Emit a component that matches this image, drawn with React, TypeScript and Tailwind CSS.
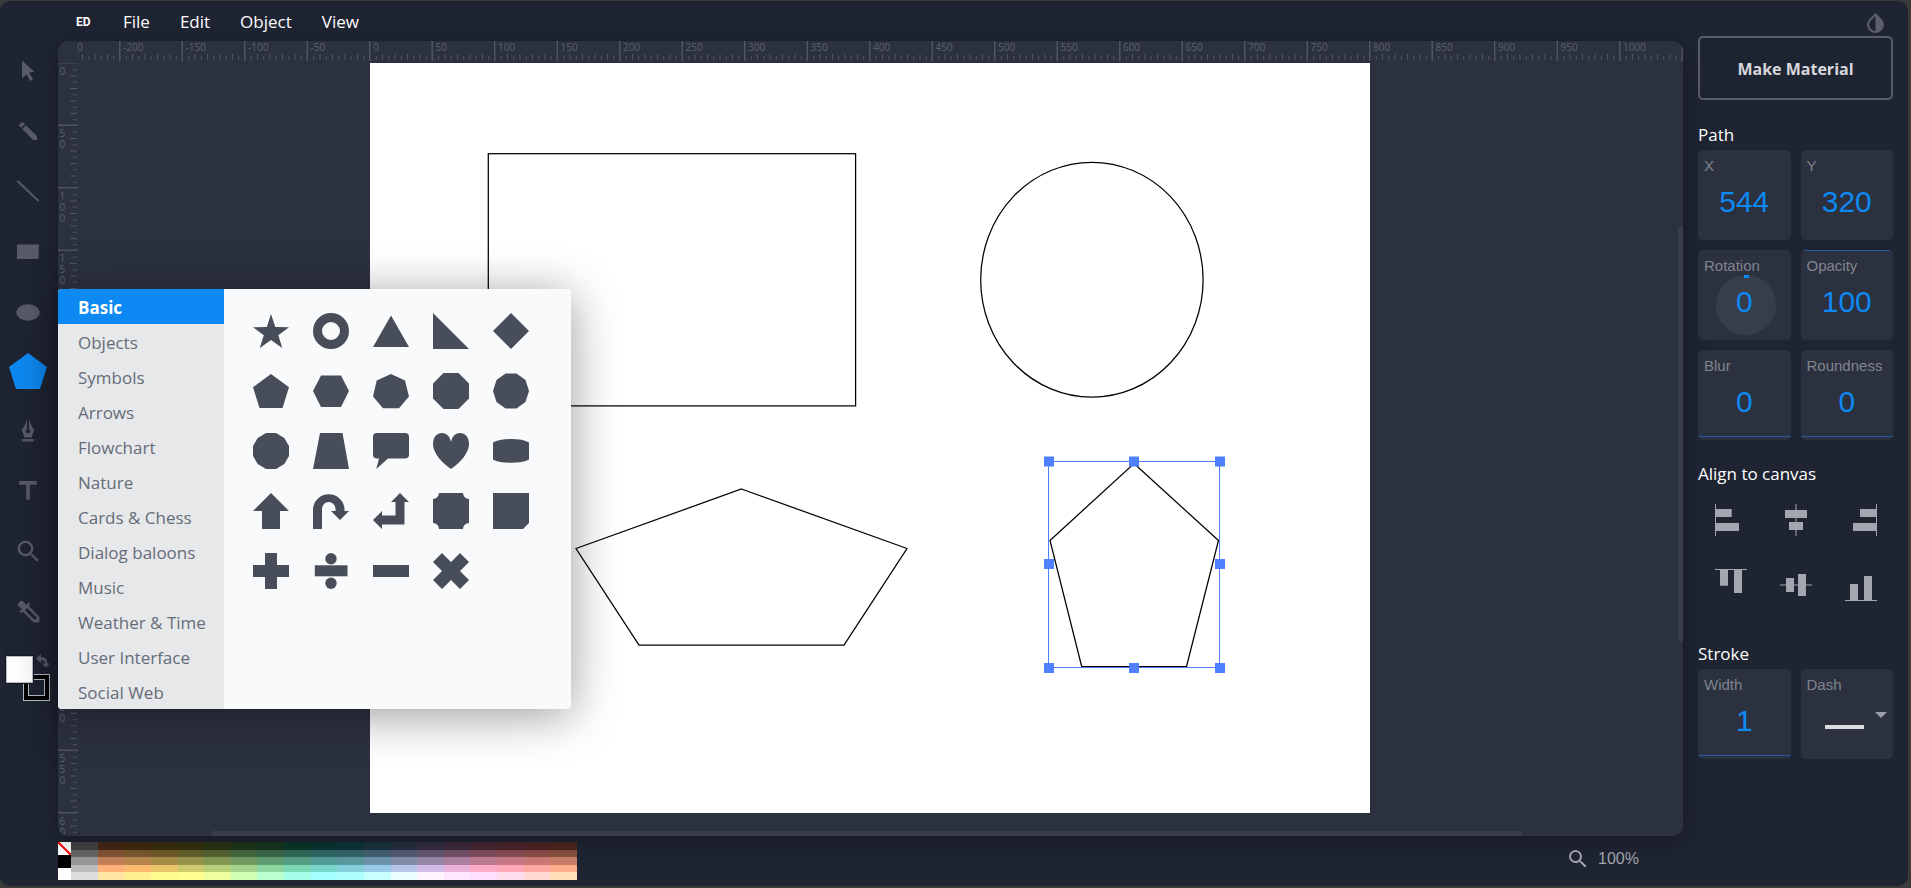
import { useState } from "react";
import type { ReactNode } from "react";
import { MdColorize, MdEdit, MdInvertColors, MdSearch, MdTitle } from "react-icons/md";

const MENUS = ["File", "Edit", "Object", "View"];

const CATEGORIES = [
  "Basic",
  "Objects",
  "Symbols",
  "Arrows",
  "Flowchart",
  "Nature",
  "Cards & Chess",
  "Dialog baloons",
  "Music",
  "Weather & Time",
  "User Interface",
  "Social Web",
];

const PALETTE: string[][] = [
  ["#444444", "#482816", "#422c10", "#3b2f0e", "#32320f", "#2a3414", "#1f361b", "#153723", "#0c372c", "#083734", "#0e353b", "#1a333f", "#273141", "#332d40", "#3e2a3c", "#462735", "#4b252d", "#4d2425", "#4c261d"],
  ["#666666", "#845335", "#7b572d", "#6f5c2a", "#62612b", "#546433", "#46673e", "#3a684a", "#306857", "#2d6762", "#34646b", "#436070", "#535b72", "#645670", "#74516a", "#804d5f", "#884c54", "#8a4c48", "#874f3d"],
  ["#999999", "#c48157", "#b8874d", "#a98e49", "#97944b", "#849854", "#729c62", "#619e73", "#559e84", "#529c95", "#5b9aa0", "#6d95aa", "#828eab", "#9888a9", "#ad81a1", "#be7b93", "#c77985", "#cb7975", "#c87e66"],
  ["#bbbbbb", "#ffb27c", "#fdba70", "#e8c46b", "#cecb6e", "#b8d07a", "#a2d58b", "#8cd79f", "#7dd8b5", "#7ad6ca", "#84d1db", "#9acbe7", "#b5c4e9", "#d0bce6", "#ebb3db", "#ffaccb", "#ffa9b9", "#ffa8a2", "#ffac8c"],
  ["#dddddd", "#ffe5a3", "#ffef93", "#fffa8e", "#ffff91", "#edffa0", "#d0ffb4", "#baffcf", "#a7ffea", "#a5ffff", "#afffff", "#c8ffff", "#eaffff", "#fff5ff", "#ffe8ff", "#ffdfff", "#ffdcec", "#ffdad4", "#ffdfba"],
];

const poly = (points: string) => <polygon points={points} />;

const SHAPES: { name: string; art: ReactNode }[] = [
  { name: "Star", art: poly("18,1 22.3,14 36,14.3 25.3,22.3 29.3,35 18,27 6.8,35 10.8,22.3 0,14.3 13.8,14") },
  { name: "Ring", art: <path fillRule="evenodd" d="M18 0a18 18 0 1 0 0 36a18 18 0 1 0 0-36zM18 9a9 9 0 1 1 0 18a9 9 0 1 1 0-18z" /> },
  { name: "Triangle", art: poly("18,2.5 36,34 0,34") },
  { name: "Right triangle", art: poly("0,0 36,36 0,36") },
  { name: "Diamond", art: poly("18,0 36,18 18,36 0,18") },
  { name: "Pentagon", art: poly("18,1 36,14.3 29.5,35 6.5,35 0,14.3") },
  { name: "Hexagon", art: poly("8,2.5 28,2.5 36,18 28,34 8,34 0,18") },
  { name: "Heptagon", art: poly("18,1 32,7.5 36,23.5 26,35.3 10,35.3 0,23.5 3.7,7.5") },
  { name: "Octagon", art: poly("10.5,0 25.5,0 36,10.5 36,25.5 25.5,36 10.5,36 0,25.5 0,10.5") },
  { name: "Decagon", art: poly("12.5,.5 23.5,.5 32.5,7 36,18 32.5,29 23.5,35.5 12.5,35.5 3.5,29 0,18 3.5,7") },
  { name: "Dodecagon", art: poly("13,0 23,0 31.3,5 36,13 36,23 31.3,31 23,36 13,36 4.7,31 0,23 0,13 4.7,5") },
  { name: "Trapezoid", art: poly("7,0 29.5,0 36,36 0,36") },
  { name: "Speech bubble", art: <path d="M4 0h28a4 4 0 0 1 4 4v17.5a4 4 0 0 1-4 4H15L3.3 36 6 25.5H4a4 4 0 0 1-4-4V4a4 4 0 0 1 4-4z" /> },
  { name: "Heart", art: <path d="M18 9C19 3 23 0 27 0c6 0 9 5 9 11 0 9-9 19-18 25C9 30 0 20 0 11 0 5 3 0 9 0c4 0 8 3 9 9z" /> },
  { name: "Barrel", art: <path d="M0 9.5C4 7 10 6 18 6s14 1 18 3.500v17c-4 2.300-10 3.300-18 3.300s-14-1-18-3.300z" /> },
  { name: "Up arrow", art: poly("18,0 36,18 27,18 27,36 9,36 9,18 0,18") },
  { name: "U-turn arrow", art: <path d="M0 36V15.700a15.800 15.700 0 0 1 31.500 0V18H36l-9 9-9-9h4.500v-2.300a6.750 6.700 0 0 0-13.500 0V36z" /> },
  { name: "Corner arrow", art: poly("27,0 36,9 31.5,9 31.5,31.5 9,31.5 9,36 0,27 9,18 9,22.5 22.5,22.5 22.5,9 18,9") },
  { name: "Plaque", art: <path d="M6 0h24a6 6 0 0 0 6 6v24a6 6 0 0 0-6 6H6a6 6 0 0 0-6-6V6a6 6 0 0 0 6-6z" /> },
  { name: "Card", art: poly("0,0 36,0 36,30 30,36 0,36") },
  { name: "Plus", art: poly("12,0 24,0 24,12 36,12 36,24 24,24 24,36 12,36 12,24 0,24 0,12 12,12") },
  {
    name: "Divide",
    art: (
      <>
        <circle cx="18" cy="5.700" r="5.700" />
        <rect x="1.800" y="12.300" width="32.700" height="11" />
        <circle cx="18" cy="30.300" r="5.700" />
      </>
    ),
  },
  { name: "Minus", art: <rect y="12" width="36" height="12" /> },
  { name: "Cross", art: poly("9,0 18,9 27,0 36,9 27,18 36,27 27,36 18,27 9,36 0,27 9,18 0,9") },
];

function Glyph({ children }: { children: ReactNode }) {
  return (
    <svg viewBox="-22 -22 44 44" className="size-11" fill="currentColor" aria-hidden="true">
      {children}
    </svg>
  );
}

const TOOLS: { name: string; art: ReactNode }[] = [
  { name: "Select", art: <Glyph><path d="M-6-10.500 6.300.8 1.200 1.500 5 8.300 2.200 10-1.400 3.300-6 7.500z" /></Glyph> },
  { name: "Pencil", art: <MdEdit className="size-6 -scale-x-100" /> },
  { name: "Line", art: <Glyph><path d="M-10.500-10 10.500 10" stroke="currentColor" strokeWidth="2" /></Glyph> },
  { name: "Rectangle", art: <Glyph><path d="M-11-6.500H11L10.500 8H-11z" /></Glyph> },
  { name: "Ellipse", art: <Glyph><ellipse cx="0" cy="1.500" rx="11.700" ry="8.200" /></Glyph> },
  { name: "Shape library", art: <Glyph><path d="M0-18 19-4 12 18H-12L-19-4z" /></Glyph> },
  {
    name: "Pen",
    art: (
      <Glyph>
        <path
          fillRule="evenodd"
          d="M-1-13V-1.500A2 2 0 1 0 1-1.500V-13C1.500-7 5-3.500 6.300-1 5 2 4 4.500 3.800 6.500H-3.800C-4 4.500-5 2-6.300-1-5-3.500-1.500-7-1-13zM-5.800 8H5.800V10.500H-5.800z"
        />
      </Glyph>
    ),
  },
  { name: "Text", art: <MdTitle className="size-[30px]" /> },
  { name: "Zoom", art: <MdSearch className="size-[29px]" /> },
  { name: "Eyedropper", art: <MdColorize className="size-[29px] -scale-x-100" /> },
];

const ALIGNMENTS: { name: string; d: string }[] = [
  { name: "Align left", d: "M0 0h1v32H0zM1 5h15.700v8H1zM1 19h23v8H1z" },
  { name: "Align center", d: "M15.500 0h1v32h-1zM5 6h22v8H5zM9 18h14v8H9z" },
  { name: "Align right", d: "M31 0h1v32h-1zM15 5h16v8H15zM8 19h23v8H8z" },
  { name: "Align top", d: "M0 0h32v1H0zM5 1h8v15.700H5zM19 1h8v23h-8z" },
  { name: "Align middle", d: "M0 15.500h32v1H0zM6 9h8v14H6zM18 5h8v22h-8z" },
  { name: "Align bottom", d: "M0 31h32v1H0zM5 15h8v16H5zM19 7h8v24h-8z" },
];

const UNIT = 1.25;
const STEP = 50 * UNIT;

function HorizontalRuler() {
  const origin = 312;
  const ticks: ReactNode[] = [];
  for (let k = -5; k <= 21; k++) {
    const x = origin + k * STEP;
    if (x > 24) ticks.push(<rect key={`m${k}`} x={x - 1} y="0" width="1.500" height="20" />);
    for (let i = 1; i < 10; i++) {
      const tx = x + (i * STEP) / 10;
      if (tx < 22) continue;
      const top = i % 2 ? 15 : 13;
      ticks.push(<rect key={`s${k}-${i}`} x={tx - 0.5} y={top} width="1" height={19 - top} />);
    }
    if (k > -5 && k < 21) {
      ticks.push(
        <text key={`t${k}`} x={x + 3} y="10" fontSize="10" fill="#5d616c">
          {k * 50}
        </text>,
      );
    }
  }
  return (
    <div className="h-[22px] pl-[19px]">
      <svg className="block h-5 w-full overflow-hidden" fill="#50545f" aria-hidden="true">
        <g transform="translate(-19 0)">{ticks}</g>
        {/* Only the last digit of the leading label fits beside the corner. */}
        <text x="0" y="10" fontSize="10" fill="#5d616c">
          0
        </text>
      </svg>
    </div>
  );
}

function VerticalRuler() {
  const ticks: ReactNode[] = [];
  for (let k = 0; k <= 12; k++) {
    const y = k * STEP;
    ticks.push(<rect key={`m${k}`} x="0" y={y - 1} width="20" height="1.500" />);
    for (let i = 1; i < 10; i++) {
      const ty = y + (i * STEP) / 10;
      const left = i % 2 ? 15 : 12;
      ticks.push(<rect key={`s${k}-${i}`} x={left} y={ty} width={19 - left} height="1" />);
    }
    String(k * 50)
      .slice(0, k === 12 ? 2 : 3)
      .split("")
      .forEach((digit, i) =>
        ticks.push(
          <text key={`t${k}-${i}`} x="1.500" y={y + 11.500 + i * 11} fontSize="10" fill="#5d616c">
            {digit}
          </text>,
        ),
      );
  }
  return (
    <svg className="block h-full w-5 shrink-0 overflow-hidden" fill="#50545f" aria-hidden="true">
      {ticks}
    </svg>
  );
}

const HANDLES = [
  [679, 398.500],
  [764, 398.500],
  [850, 398.500],
  [679, 501],
  [850, 501],
  [679, 605],
  [764, 605],
  [850, 605],
];

function Artboard() {
  return (
    <svg viewBox="0 0 1000 750" className="ml-[292px] block h-[750px] w-[1000px] shrink-0 bg-white" fill="none" role="img" aria-label="Artboard">
      <g stroke="#000" strokeWidth="1.250">
        <rect x="118.300" y="90.700" width="367.300" height="252.200" />
        <ellipse cx="721.900" cy="216.700" rx="111.200" ry="117.400" />
        <path d="M371.500 426 537 485.500 474 582H269L206 485.500z" />
        <path d="M764 400.500 848.500 477.500 816.500 603.500H711.700L680 477.500z" />
      </g>
      <rect x="678.500" y="398.500" width="171" height="206" stroke="#4f80ff" />
      <g fill="#4f80ff">
        {HANDLES.map(([x, y]) => (
          <rect key={`${x}-${y}`} x={x - 5} y={y - 5} width="10" height="10" />
        ))}
      </g>
    </svg>
  );
}

function ShapeLibrary() {
  const [active, setActive] = useState("Basic");
  return (
    <div className="absolute top-[288px] left-[58px] z-10 flex overflow-hidden rounded bg-[#f9fafc] shadow-[0_6px_48px_rgba(0,0,0,0.4)]">
      <div className="flex w-[166px] flex-col bg-[#e6e8ea]">
        {CATEGORIES.map((c) => (
          <button
            key={c}
            type="button"
            onClick={() => setActive(c)}
            className={
              c === active
                ? "h-[35px] bg-[#0c89f2] pt-0.5 pl-5 text-left text-[17px] font-bold text-white"
                : "h-[35px] pt-0.5 pl-5 text-left text-[17px] whitespace-nowrap text-[#666c79]"
            }
          >
            {c}
          </button>
        ))}
      </div>
      <div className="grid w-[347px] grid-cols-[repeat(5,36px)] content-start gap-6 pt-6 pl-[29px]">
        {SHAPES.map((s) => (
          <button key={s.name} type="button" aria-label={s.name} className="size-9">
            <svg viewBox="0 0 36 36" className="block size-9" fill="#474d59" aria-hidden="true">
              {s.art}
            </svg>
          </button>
        ))}
      </div>
    </div>
  );
}

function Toolbar() {
  return (
    <nav aria-label="Tools" className="flex w-[58px] shrink-0 flex-col items-center pr-0.5">
      {TOOLS.map((t) => (
        <button
          key={t.name}
          type="button"
          aria-label={t.name}
          className={
            t.name === "Shape library"
              ? "flex h-[60px] w-full items-center justify-center text-[#0c89f2]"
              : "flex h-[60px] w-full items-center justify-center text-[#575b67]"
          }
        >
          {t.art}
        </button>
      ))}
      <div className="relative mt-[15px] h-[45px] w-11">
        <button type="button" aria-label="Stroke color" className="absolute right-0 bottom-0 size-[27px] border border-[#b9bcc4] bg-black p-1">
          <span className="block size-full border border-[#b9bcc4] bg-[#1f2433]" />
        </button>
        <button type="button" aria-label="Fill color" className="absolute top-0 left-0 size-[27px] border border-[#b9bcc4] bg-white outline outline-[#171b28]" />
        <button type="button" aria-label="Swap colors" className="absolute -top-0.5 right-0 text-[#575b67]">
          <svg viewBox="0 0 14 14" className="block size-[14px]" fill="currentColor" aria-hidden="true">
            <path d="M0 4.500 5 0v3c4.500.2 6.500 2.500 6.500 6.500H14L9.800 13.800 6 9.500h2.800C8.800 7 7.500 6 5 6v3z" />
          </svg>
        </button>
      </div>
    </nav>
  );
}

function Heading({ children }: { children: ReactNode }) {
  return <h2 className="text-[17px] leading-6 text-white">{children}</h2>;
}

function Field({ id, label, value, line }: { id: string; label: string; value: string; line?: "top" | "bottom" }) {
  return (
    <div className="relative h-[90px] overflow-hidden rounded-[5px] bg-[#2c313f] pt-1.5 font-['Liberation_Sans',sans-serif]">
      {line === "top" && <span className="absolute inset-x-0 top-0 h-px bg-[#1f5ca4]" />}
      {line === "bottom" && <span className="absolute inset-x-0 bottom-[3px] h-px bg-[#1f5ca4]" />}
      {id === "rotation" && (
        <span className="absolute bottom-[5px] left-[18px] size-[60px] rounded-full bg-[#383d4b]">
          <span className="absolute top-0 left-7 h-[3px] w-[5px] bg-[#0c89f2]" />
        </span>
      )}
      <label htmlFor={id} className="relative block pl-1.5 text-[15px] leading-5 text-[#80848e]">
        {label}
      </label>
      <input
        id={id}
        type="text"
        defaultValue={value}
        className="relative mt-2 block h-9 w-full bg-transparent text-center text-[30px] leading-9 text-[#0c89f2] outline-none"
      />
    </div>
  );
}

function Inspector() {
  return (
    <aside className="flex w-[225px] shrink-0 flex-col pr-[15px] pl-[15px]">
      <div className="flex h-[35px] items-end justify-end pr-[5px]">
        <button type="button" aria-label="Invert interface colors" className="text-[#5b5f6b]">
          <MdInvertColors className="size-[25px]" />
        </button>
      </div>
      <button type="button" className="h-16 rounded-[5px] border-2 border-[#595d69] pt-0.5 text-[16px] font-bold text-[#d6d8dd]">
        Make Material
      </button>

      <section className="mt-[23px]">
        <Heading>Path</Heading>
        <div className="mt-[3px] grid grid-cols-2 gap-2.5">
          <Field id="x" label="X" value="544" />
          <Field id="y" label="Y" value="320" />
          <Field id="rotation" label="Rotation" value="0" />
          <Field id="opacity" label="Opacity" value="100" line="top" />
          <Field id="blur" label="Blur" value="0" line="bottom" />
          <Field id="roundness" label="Roundness" value="0" line="bottom" />
        </div>
      </section>

      <section className="mt-[22px]">
        <Heading>Align to canvas</Heading>
        <div className="mt-px grid grid-cols-3">
          {ALIGNMENTS.map((a) => (
            <button key={a.name} type="button" aria-label={a.name} className="flex h-[65px] items-center justify-center">
              <svg viewBox="0 0 32 32" className="size-8" fill="#a5a7b0" aria-hidden="true">
                <path d={a.d} />
              </svg>
            </button>
          ))}
        </div>
      </section>

      <section className="mt-[25px]">
        <Heading>Stroke</Heading>
        <div className="mt-[3px] grid grid-cols-2 gap-2.5">
          <Field id="stroke-width" label="Width" value="1" line="bottom" />
          <div className="relative h-[90px] rounded-[5px] bg-[#2c313f] pt-1.5 font-['Liberation_Sans',sans-serif]">
            <label htmlFor="dash" className="block pl-1.5 text-[15px] leading-5 text-[#80848e]">
              Dash
            </label>
            <select id="dash" className="mt-2 block h-9 w-full appearance-none bg-transparent text-transparent outline-none">
              <option>Solid</option>
            </select>
            <span className="pointer-events-none absolute top-14 left-6 h-1 w-[39px] bg-[#dadbde]" />
            <svg viewBox="0 0 12 6" className="pointer-events-none absolute top-[43px] right-1.5 h-1.5 w-3" fill="#9b9eab" aria-hidden="true">
              <path d="M0 0h12L6 6z" />
            </svg>
          </div>
        </div>
      </section>
    </aside>
  );
}

function Footer() {
  return (
    <footer className="flex h-[50px] shrink-0 items-start justify-between pt-1.5">
      <div className="flex h-[38px] w-[519px]">
        <div className="flex w-[13px] flex-col">
          <button type="button" aria-label="No color" className="w-full flex-1 bg-white">
            <svg viewBox="0 0 13 13" className="block size-[13px]" aria-hidden="true">
              <path d="M0 0 13 13" stroke="#f00" strokeWidth="2" />
            </svg>
          </button>
          <button type="button" aria-label="Black" className="w-full flex-1 bg-black" />
          <button type="button" aria-label="White" className="w-full flex-1 bg-white" />
        </div>
        <div className="flex flex-1 flex-col">
          {PALETTE.map((row, i) => (
            <div key={i} className="flex flex-1">
              {row.map((c) => (
                <button key={c} type="button" aria-label={c} className="flex-1" style={{ backgroundColor: c }} />
              ))}
            </div>
          ))}
        </div>
      </div>
      <label className="mt-[5px] mr-[30px] flex items-center gap-2 text-[#a5a7b0]">
        <MdSearch className="size-6" aria-label="Zoom level" />
        <input
          type="text"
          defaultValue="100%"
          className="h-6 w-[55px] bg-transparent font-['Liberation_Sans',sans-serif] text-[16px] outline-none"
        />
      </label>
    </footer>
  );
}

export default function App() {
  return (
    <div className="flex h-screen min-h-[780px] bg-[#3a3a3a] pt-px pr-[3px] pb-0.5 font-['Open_Sans','Noto_Sans',sans-serif]">
      <div className="relative flex min-w-0 flex-1 overflow-hidden rounded-[10px] bg-[#1f2433]">
        <div className="flex min-w-0 flex-1 flex-col">
          <header className="flex h-10 shrink-0 items-center pt-0.5 pl-[76px]">
            <span className="w-4 font-['Roboto',sans-serif] text-[12px] leading-6 font-bold text-white">ED</span>
            <div className="flex pl-4">
              {MENUS.map((m) => (
                <button key={m} type="button" className="px-[15px] text-[17px] leading-6 text-white">
                  {m}
                </button>
              ))}
            </div>
          </header>
          <div className="flex min-h-0 flex-1">
            <Toolbar />
            <div className="flex min-w-0 flex-1 flex-col">
              <main className="relative flex min-h-0 flex-1 flex-col overflow-hidden rounded-[10px] bg-[#2c313f] shadow-[0_5px_25px_rgba(0,0,0,0.3)]">
                <HorizontalRuler />
                <div className="flex min-h-0 flex-1">
                  <VerticalRuler />
                  <Artboard />
                </div>
                <span className="absolute top-[23.3%] right-0 h-[52.3%] w-[5px] rounded-full bg-[#383d4b]" />
                <span className="absolute bottom-0 left-[9.4%] h-[5px] w-[80.7%] rounded-full bg-[#383d4b]" />
              </main>
              <Footer />
            </div>
          </div>
        </div>
        <Inspector />
        <ShapeLibrary />
      </div>
    </div>
  );
}
